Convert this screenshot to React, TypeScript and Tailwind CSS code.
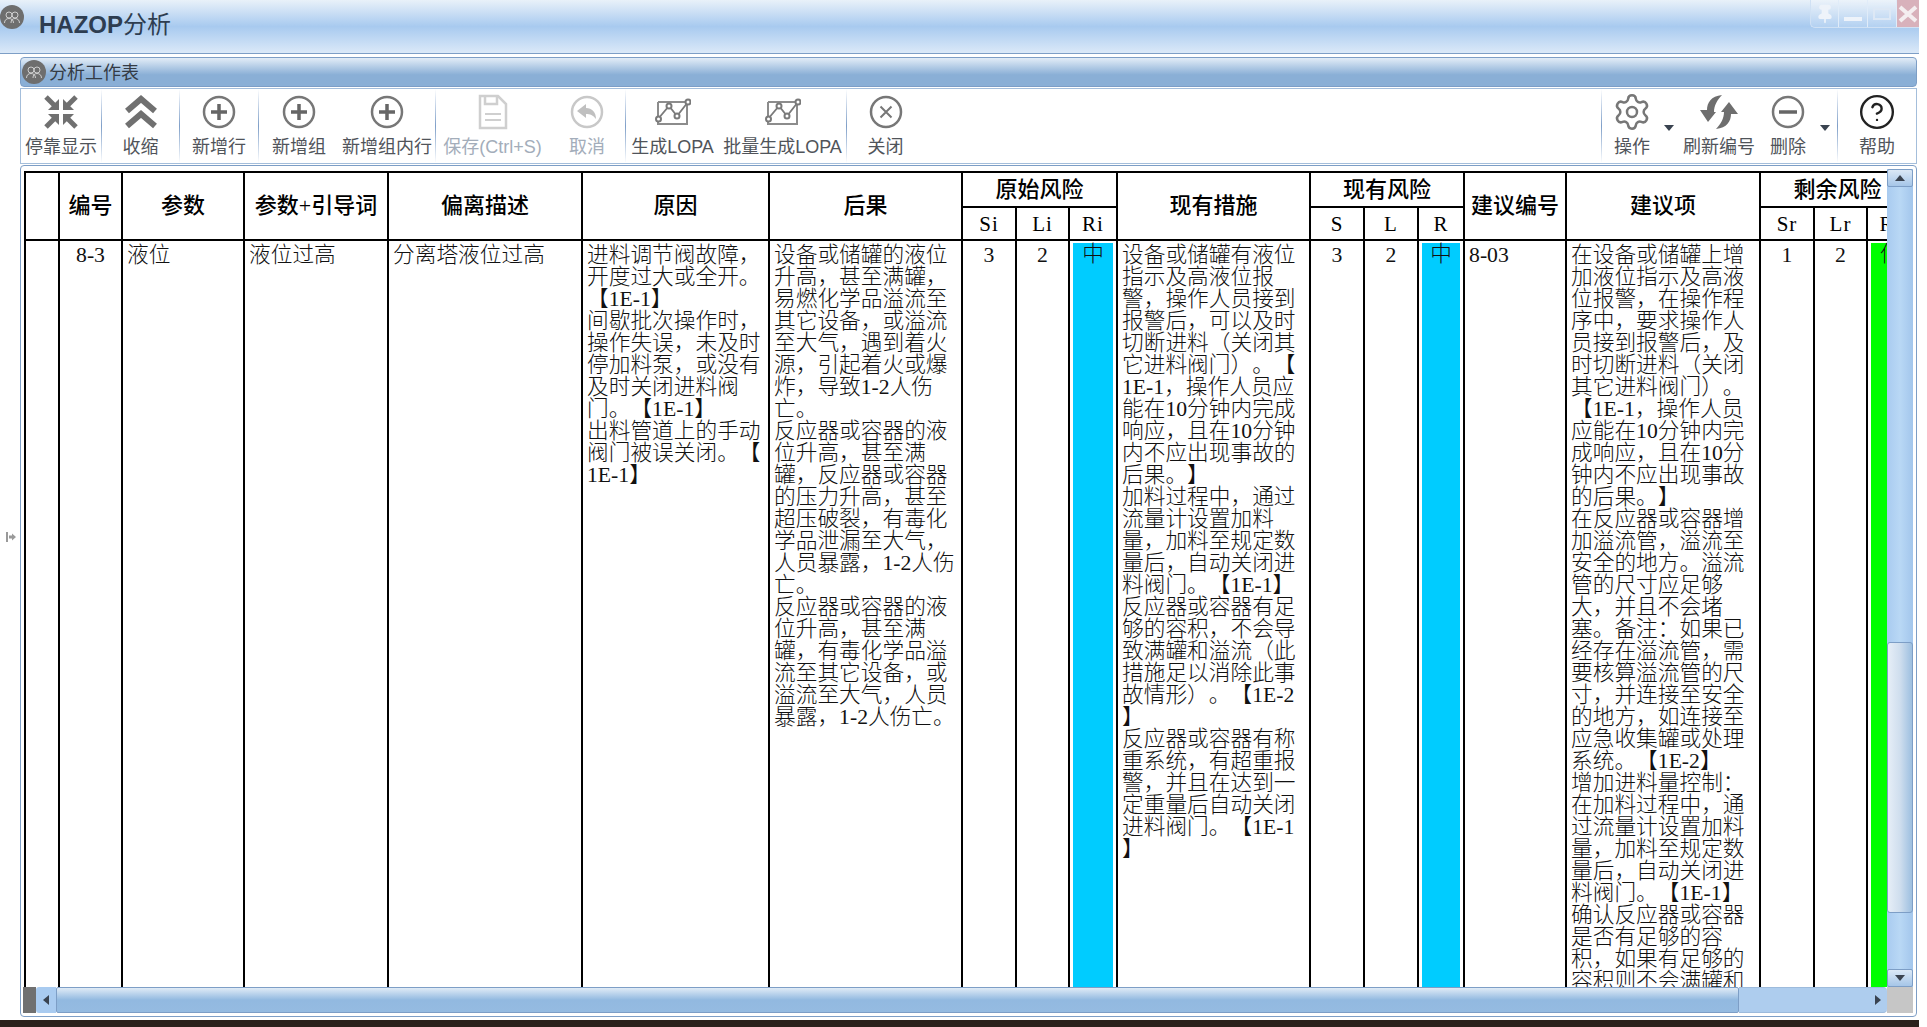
import { Pin, Settings, CircleHelp } from 'lucide-react';

const causeLines = [
  '进料调节阀故障，', '开度过大或全开。', '【1E-1】', '间歇批次操作时，', '操作失误，未及时', '停加料泵，或没有', '及时关闭进料阀',
  '门。【1E-1】', '出料管道上的手动', '阀门被误关闭。【', '1E-1】',
];

const resultLines = [
  '设备或储罐的液位', '升高，甚至满罐，', '易燃化学品溢流至', '其它设备，或溢流', '至大气，遇到着火', '源，引起着火或爆', '炸，导致1-2人伤',
  '亡。', '反应器或容器的液', '位升高，甚至满', '罐，反应器或容器', '的压力升高，甚至', '超压破裂，有毒化', '学品泄漏至大气，',
  '人员暴露，1-2人伤', '亡。', '反应器或容器的液', '位升高，甚至满', '罐，有毒化学品溢', '流至其它设备，或', '溢流至大气，人员', '暴露，1-2人伤亡。',
];

const measureLines = [
  '设备或储罐有液位', '指示及高液位报', '警，操作人员接到', '报警后，可以及时', '切断进料（关闭其', '它进料阀门）。【', '1E-1，操作人员应',
  '能在10分钟内完成', '响应，且在10分钟', '内不应出现事故的', '后果。】', '加料过程中，通过', '流量计设置加料', '量，加料至规定数',
  '量后，自动关闭进', '料阀门。【1E-1】', '反应器或容器有足', '够的容积，不会导', '致满罐和溢流（此', '措施足以消除此事', '故情形）。【1E-2',
  '】', '反应器或容器有称', '重系统，有超重报', '警，并且在达到一', '定重量后自动关闭', '进料阀门。【1E-1', '】',
];

const adviceLines = [
  '在设备或储罐上增', '加液位指示及高液', '位报警，在操作程', '序中，要求操作人', '员接到报警后，及', '时切断进料（关闭', '其它进料阀门）。',
  '【1E-1，操作人员', '应能在10分钟内完', '成响应，且在10分', '钟内不应出现事故', '的后果。】', '在反应器或容器增', '加溢流管，溢流至',
  '安全的地方。溢流', '管的尺寸应足够', '大，并且不会堵', '塞。备注：如果已', '经存在溢流管，需', '要核算溢流管的尺', '寸，并连接至安全',
  '的地方，如连接至', '应急收集罐或处理', '系统。【1E-2】', '增加进料量控制：', '在加料过程中，通', '过流量计设置加料', '量，加料至规定数',
  '量后，自动关闭进', '料阀门。【1E-1】', '确认反应器或容器', '是否有足够的容', '积，如果有足够的', '容积则不会满罐和',
];

const colWidths = [34, 63, 122, 144, 194, 187, 193, 54, 53, 48, 193, 54, 54, 46, 102, 194, 54, 53, 48];

const thClass = 'border-2 border-black p-0 text-center font-medium text-[22px] leading-[22px] text-black';
const subThClass = 'border-2 border-black p-0 text-center font-normal text-[21px] leading-[22px] tracking-[1px] text-black';
const tdClass = 'border-2 border-black pl-[4px] pr-[2px] pt-[3px] align-top text-[21.7px] leading-[22px] text-[#111] font-light whitespace-nowrap [text-spacing-trim:space-all]';
const tdCenterClass = 'border-2 border-black px-[3px] pt-[3px] align-top text-center text-[21.7px] leading-[22px] text-[#111] font-light whitespace-nowrap';
const riskClass = 'border-2 border-black px-[3px] py-[2px] align-top text-center text-[21.7px] leading-[22px] text-[#111] font-light';

const Lines = ({ lines }: { lines: string[] }) => (
  <>
    {lines.map((line, i) => (
      <div key={i}>{line}</div>
    ))}
  </>
);

const PeopleLogo = ({ size }: { size: string }) => (
  <svg viewBox="0 0 24 24" className={size}>
    <circle cx="12" cy="12" r="12" fill="#6e6e6e" />
    <g fill="none" stroke="#d8d8d8" strokeWidth="0.9">
      <circle cx="9" cy="10" r="3" />
      <circle cx="15" cy="10" r="3" />
      <path d="M4.5 18c0-3 2-4.5 4.5-4.5s4.5 1.500 4.500 4.500" />
      <path d="M11 18c0-3 1.500-4.500 4-4.500s4.500 1.500 4.500 4.500" />
    </g>
  </svg>
);

const DockIcon = () => (
  <svg viewBox="0 0 36 36" className="h-[36px] w-[36px]" fill="#707070" stroke="#707070">
    <g>
      <path d="M3 3 L13 13" strokeWidth="5" />
      <path d="M16 16 L16 5 L5 16 Z" strokeWidth="0" />
    </g>
    <g transform="rotate(90 18 18)">
      <path d="M3 3 L13 13" strokeWidth="5" />
      <path d="M16 16 L16 5 L5 16 Z" strokeWidth="0" />
    </g>
    <g transform="rotate(180 18 18)">
      <path d="M3 3 L13 13" strokeWidth="5" />
      <path d="M16 16 L16 5 L5 16 Z" strokeWidth="0" />
    </g>
    <g transform="rotate(270 18 18)">
      <path d="M3 3 L13 13" strokeWidth="5" />
      <path d="M16 16 L16 5 L5 16 Z" strokeWidth="0" />
    </g>
  </svg>
);

const ChevronsIcon = () => (
  <svg viewBox="0 0 36 34" className="h-[34px] w-[36px]" fill="none" stroke="#707070" strokeWidth="6">
    <path d="M4 16 L18 4 L32 16" />
    <path d="M4 31 L18 19 L32 31" />
  </svg>
);

const CircleIcon = ({ children, color = '#777777' }: { children: React.ReactNode; color?: string }) => (
  <svg viewBox="0 0 34 34" className="h-[34px] w-[34px]" fill="none" stroke={color}>
    <circle cx="17" cy="17" r="15" strokeWidth="2.500" />
    {children}
  </svg>
);

const PlusIcon = () => (
  <CircleIcon>
    <path d="M17 9 V25 M9 17 H25" strokeWidth="3.500" stroke="#666666" />
  </CircleIcon>
);

const MinusIcon = () => (
  <CircleIcon>
    <path d="M8 17 H26" strokeWidth="3.500" stroke="#666666" />
  </CircleIcon>
);

const CloseIcon = () => (
  <CircleIcon>
    <path d="M11.500 11.500 L22.500 22.500 M22.500 11.500 L11.500 22.500" strokeWidth="2" />
  </CircleIcon>
);

const CancelIcon = () => (
  <CircleIcon color="#c8c8c8">
    <path d="M7 16 L16 9 V13 C22 13 26 17 26 24 C23 20 20 19 16 19 V23 Z" fill="#c0c0c0" stroke="none" />
  </CircleIcon>
);

const SaveIcon = () => (
  <svg viewBox="0 0 30 36" className="h-[36px] w-[30px]" fill="none" stroke="#cfcfcf" strokeWidth="2.500">
    <path d="M2 2 H20 L28 10 V34 H2 Z" />
    <path d="M7 2 V10 H19 V2" />
    <path d="M7 20 H23 M7 26 H23" strokeWidth="2" />
  </svg>
);

const LopaIcon = () => (
  <svg viewBox="0 0 36 28" className="h-[28px] w-[36px]" fill="none" stroke="#7a7a7a" strokeWidth="2">
    <path d="M3 4 H32 V26 H3 V4" strokeWidth="2" stroke="#8c8c8c" />
    <path d="M3 21 L14 8 L22 18 L33 4" strokeWidth="1.800" />
    <circle cx="3.500" cy="21" r="2.500" fill="#fff" />
    <circle cx="14" cy="8" r="2.500" fill="#fff" />
    <circle cx="22" cy="18" r="2.500" fill="#fff" />
    <circle cx="33" cy="4" r="2.500" fill="#fff" />
  </svg>
);

const RefreshIcon = () => (
  <svg viewBox="0 0 38 34" className="h-[34px] w-[38px]" fill="#6e6e6e">
    <path d="M22 0 C11 1 7 8 7 15 H0 L8 27 L16 17 H14 C14 11 17 5 22 0 Z" />
    <path d="M16 34 C27 33 31 26 31 19 H38 L29 7 L21 17 H24 C24 23 21 29 16 34 Z" />
  </svg>
);

interface ToolButtonProps {
  label: string;
  width: string;
  icon: React.ReactNode;
  disabled?: boolean;
}

const ToolButton = ({ label, width, icon, disabled }: ToolButtonProps) => (
  <div className={`flex h-full flex-col items-center ${width}`}>
    <div className="flex h-[46px] items-center justify-center">{icon}</div>
    <span className={`whitespace-nowrap text-[18px] leading-[24px] ${disabled ? 'text-[#a3adba]' : 'text-[#50545a]'}`}>
      {label}
    </span>
  </div>
);

const Sep = () => <div className="h-full w-px shrink-0 bg-linear-to-b from-white via-[#7f9fc8] to-white" />;

const DropArrow = () => (
  <div className="flex h-[44px] w-[14px] shrink-0 items-end justify-center pb-[2px]">
    <div className="h-0 w-0 border-x-[5px] border-t-[6px] border-x-transparent border-t-[#3a4350]" />
  </div>
);

const WindowButtons = () => (
  <div className="flex h-[28px] w-[109px] rounded-bl-[5px] border-b border-l border-[#d0e1f4] bg-white/15">
    <div className="flex w-[28px] items-center justify-center border-r border-[#e0ecf9]">
      <Pin size={20} className="fill-[#eef3fa] text-[#eef3fa]" />
    </div>
    <div className="flex w-[29px] items-end justify-center border-r border-[#e0ecf9] pb-[6px]">
      <div className="h-[4px] w-[18px] bg-[#eef3fa]" />
    </div>
    <div className="flex w-[29px] items-center justify-center border-r border-[#e0ecf9]">
      <div className="h-[12px] w-[18px] border-2 border-[#dde8f5]" />
    </div>
    <div className="flex flex-1 items-center justify-center bg-[#d8b1bb]">
      <svg viewBox="0 0 20 20" className="h-[20px] w-[20px]" stroke="#f4eef0" strokeWidth="4">
        <path d="M2 3 L18 17 M18 3 L2 17" />
      </svg>
    </div>
  </div>
);

const VScrollBtn = ({ dir }: { dir: 'up' | 'down' }) => (
  <div className="flex h-[18px] items-center justify-center rounded-[2px] border border-[#7d9ec6] bg-linear-to-b from-[#dbe8f6] to-[#a6c6e8]">
    <div className={`h-0 w-0 border-x-[5px] border-x-transparent ${dir === 'up' ? 'border-b-[6px] border-b-[#3a4350]' : 'border-t-[6px] border-t-[#3a4350]'}`} />
  </div>
);

export default function App() {
  return (
    <div className="flex h-screen w-screen flex-col overflow-hidden bg-white font-['Liberation_Sans','Noto_Sans_CJK_SC',sans-serif]">
      <div className="flex min-h-0 w-[1919px] flex-1 flex-col">
        {/* title bar */}
        <div className="flex h-[54px] shrink-0 items-start justify-between border-b border-[#7d9ec6] bg-linear-to-b from-[#e9f1f9] via-[#a8caef] via-50% to-[#dbe9f8]">
          <div className="flex items-start">
            <div className="pt-[5px]">
              <PeopleLogo size="h-[24px] w-[24px]" />
            </div>
            <div className="pt-[11px] pl-[15px] text-[24px] leading-[28px] text-[#2e3d50]">
              <span className="font-bold">HAZOP</span>分析
            </div>
          </div>
          <WindowButtons />
        </div>

        <div className="flex min-h-0 flex-1">
          {/* left gutter */}
          <div className="flex w-[20px] shrink-0 items-center pl-[6px]">
            <svg viewBox="0 0 10 10" className="h-[10px] w-[10px]" fill="#9a9a9a">
              <path d="M0 0 H2 V10 H0 Z M3 3.500 H6 V1.500 L10 5 L6 8.500 V6.500 H3 Z" />
            </svg>
          </div>

          <div className="flex min-w-0 flex-1 flex-col pt-[3px] pb-[3px] pr-[2px]">
            {/* panel header */}
            <div className="flex h-[30px] shrink-0 items-center rounded-[4px] border border-[#7d9ec6] bg-linear-to-b from-[#e3edf7] via-[#8aafd6] via-60% to-[#8aafd6] pl-[1px]">
              <PeopleLogo size="h-[24px] w-[24px]" />
              <span className="pl-[3px] pt-[2px] text-[18px] leading-[24px] text-[#333b45]">分析工作表</span>
            </div>

            {/* toolbar */}
            <div className="mt-[1px] flex h-[76px] shrink-0 items-stretch border border-[#a4bedb] bg-white">
              <ToolButton label="停靠显示" width="w-[80px]" icon={<DockIcon />} />
              <Sep />
              <ToolButton label="收缩" width="w-[77px]" icon={<ChevronsIcon />} />
              <Sep />
              <ToolButton label="新增行" width="w-[78px]" icon={<PlusIcon />} />
              <Sep />
              <ToolButton label="新增组" width="w-[80px]" icon={<PlusIcon />} />
              <ToolButton label="新增组内行" width="w-[96px]" icon={<PlusIcon />} />
              <Sep />
              <ToolButton label="保存(Ctrl+S)" width="w-[113px]" icon={<SaveIcon />} disabled />
              <ToolButton label="取消" width="w-[76px]" icon={<CancelIcon />} disabled />
              <Sep />
              <ToolButton label="生成LOPA" width="w-[93px]" icon={<LopaIcon />} />
              <ToolButton label="批量生成LOPA" width="w-[127px]" icon={<LopaIcon />} />
              <Sep />
              <ToolButton label="关闭" width="w-[77px]" icon={<CloseIcon />} />
              <div className="flex-1" />
              <Sep />
              <ToolButton label="操作" width="w-[60px]" icon={<Settings size={40} strokeWidth={1.5} className="text-[#777777]" />} />
              <DropArrow />
              <ToolButton label="刷新编号" width="w-[86px]" icon={<RefreshIcon />} />
              <ToolButton label="删除" width="w-[52px]" icon={<MinusIcon />} />
              <div className="w-[4px] shrink-0" />
              <DropArrow />
              <div className="w-[5px] shrink-0" />
              <Sep />
              <ToolButton label="帮助" width="w-[78px]" icon={<CircleHelp size={38} strokeWidth={1.5} className="text-[#222222]" />} />
            </div>

            {/* table panel */}
            <div className="mt-[1px] flex min-h-0 flex-1 flex-col rounded-[4px] border border-[#7d9ec6] pl-[2px] pr-[3px] pb-[3px] pt-[3px] font-['Liberation_Serif','Noto_Sans_CJK_SC',serif]">
              <div className="flex min-h-0 flex-1">
                <div className="min-w-0 flex-1 overflow-hidden pt-[2px] pl-[1px]">
                  <table className="w-[1889px] table-fixed border-collapse">
                    <colgroup>
                      {colWidths.map((w, i) => (
                        <col key={i} style={{ width: w }} />
                      ))}
                    </colgroup>
                    <thead>
                      <tr className="h-[35px]">
                        <th rowSpan={2} className={thClass} />
                        <th rowSpan={2} className={thClass}>编号</th>
                        <th rowSpan={2} className={thClass}>参数</th>
                        <th rowSpan={2} className={thClass}>参数+引导词</th>
                        <th rowSpan={2} className={thClass}>偏离描述</th>
                        <th rowSpan={2} className={thClass}>原因</th>
                        <th rowSpan={2} className={thClass}>后果</th>
                        <th colSpan={3} className={thClass}>原始风险</th>
                        <th rowSpan={2} className={thClass}>现有措施</th>
                        <th colSpan={3} className={thClass}>现有风险</th>
                        <th rowSpan={2} className={thClass}>建议编号</th>
                        <th rowSpan={2} className={thClass}>建议项</th>
                        <th colSpan={3} className={thClass}>剩余风险</th>
                      </tr>
                      <tr className="h-[33px]">
                        <th className={subThClass}>Si</th>
                        <th className={subThClass}>Li</th>
                        <th className={subThClass}>Ri</th>
                        <th className={subThClass}>S</th>
                        <th className={subThClass}>L</th>
                        <th className={subThClass}>R</th>
                        <th className={subThClass}>Sr</th>
                        <th className={subThClass}>Lr</th>
                        <th className={subThClass}>Rr</th>
                      </tr>
                    </thead>
                    <tbody>
                      <tr>
                        <td className={tdClass} />
                        <td className={tdCenterClass}>8-3</td>
                        <td className={tdClass}>液位</td>
                        <td className={tdClass}>液位过高</td>
                        <td className={tdClass}>分离塔液位过高</td>
                        <td className={tdClass}><Lines lines={causeLines} /></td>
                        <td className={tdClass}><Lines lines={resultLines} /></td>
                        <td className={tdCenterClass}>3</td>
                        <td className={tdCenterClass}>2</td>
                        <td className={riskClass}><div className="h-[770px] bg-[#00ccff]">中</div></td>
                        <td className={tdClass}><Lines lines={measureLines} /></td>
                        <td className={tdCenterClass}>3</td>
                        <td className={tdCenterClass}>2</td>
                        <td className={riskClass}><div className="h-[770px] bg-[#00ccff]">中</div></td>
                        <td className={tdClass}>8-03</td>
                        <td className={tdClass}><Lines lines={adviceLines} /></td>
                        <td className={tdCenterClass}>1</td>
                        <td className={tdCenterClass}>2</td>
                        <td className={riskClass}><div className="h-[770px] bg-[#00ff00]">低</div></td>
                      </tr>
                    </tbody>
                  </table>
                </div>

                {/* vertical scrollbar */}
                <div className="flex w-[26px] shrink-0 flex-col bg-linear-to-r from-[#a9cbf0] via-[#b9d8f5] to-[#a3c6ec]">
                  <VScrollBtn dir="up" />
                  <div className="h-[455px]" />
                  <div className="h-[271px] rounded-[3px] border border-[#7d9ec6] bg-linear-to-r from-[#e6eef7] via-[#cfdeee] via-50% to-[#9dbfe0]" />
                  <div className="flex-1" />
                  <VScrollBtn dir="down" />
                </div>
              </div>

              {/* horizontal scrollbar */}
              <div className="flex h-[26px] shrink-0">
                <div className="w-[13px] bg-[#707070]" />
                <div className="flex w-[20px] items-center justify-center rounded-l-[3px] bg-[#a9cbf0]">
                  <div className="h-0 w-0 border-y-[5px] border-r-[6px] border-y-transparent border-r-[#3a4350]" />
                </div>
                <div className="w-[1683px] rounded-[2px] border border-[#7d9ec6] bg-linear-to-b from-[#e0ebf6] via-[#92b9e0] via-50% to-[#95bbe1]" />
                <div className="flex flex-1 items-center justify-end rounded-r-[4px] border-y border-[#9dbbdc] bg-[#aecdee] pr-[6px]">
                  <div className="h-0 w-0 border-y-[5px] border-l-[6px] border-y-transparent border-l-[#3a4350]" />
                </div>
                <div className="w-[26px] bg-[#c6c6c6]" />
              </div>
            </div>
          </div>
        </div>
      </div>

      <div className="h-[7px] w-[1919px] shrink-0 bg-[#2a201b]" />
    </div>
  );
}
